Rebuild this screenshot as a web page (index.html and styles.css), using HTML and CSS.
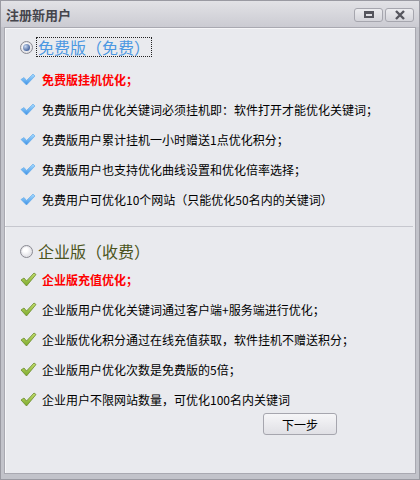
FILE: index.html
```html
<!DOCTYPE html>
<html>
<head>
<meta charset="utf-8">
<link rel="stylesheet" href="styles.css">
</head>
<body>
<div class="window">
  <div class="titlebar">
    <span class="title">注册新用户</span>
    <div class="tbtns">
      <span class="tbtn"><span class="restore"></span></span>
      <span class="tbtn"><svg width="12" height="10" viewBox="0 0 12 10"><path d="M2 1 L10 9 M10 1 L2 9" stroke="#55555d" stroke-width="2.4" fill="none"/></svg></span>
    </div>
  </div>
  <div class="panel">
    <div class="section sec1">
      <div class="head">
        <span class="radio on"><span class="dot"></span></span>
        <span class="htext free">免费版（免费）</span>
      </div>
      <ul class="list l1">
        <li><svg class="ck" width="16" height="13" viewBox="0 0 16 13"><defs><linearGradient id="gb" x1="0" y1="0" x2="0" y2="1"><stop offset="0" stop-color="#a8dcff"/><stop offset="1" stop-color="#3e92e6"/></linearGradient></defs><path d="M1 6.5 L4 4.5 L6.5 7.5 L13 1 L15 3 L6.5 12 Z" fill="url(#gb)" stroke="#5aa6ea" stroke-width="0.6"/></svg><span class="red">免费版挂机优化；</span></li>
        <li><svg class="ck" width="16" height="13" viewBox="0 0 16 13"><path d="M1 6.5 L4 4.5 L6.5 7.5 L13 1 L15 3 L6.5 12 Z" fill="url(#gb)" stroke="#5aa6ea" stroke-width="0.6"/></svg><span>免费版用户优化关键词必须挂机即：软件打开才能优化关键词；</span></li>
        <li><svg class="ck" width="16" height="13" viewBox="0 0 16 13"><path d="M1 6.5 L4 4.5 L6.5 7.5 L13 1 L15 3 L6.5 12 Z" fill="url(#gb)" stroke="#5aa6ea" stroke-width="0.6"/></svg><span>免费版用户累计挂机一小时赠送1点优化积分；</span></li>
        <li><svg class="ck" width="16" height="13" viewBox="0 0 16 13"><path d="M1 6.5 L4 4.5 L6.5 7.5 L13 1 L15 3 L6.5 12 Z" fill="url(#gb)" stroke="#5aa6ea" stroke-width="0.6"/></svg><span>免费版用户也支持优化曲线设置和优化倍率选择；</span></li>
        <li><svg class="ck" width="16" height="13" viewBox="0 0 16 13"><path d="M1 6.5 L4 4.5 L6.5 7.5 L13 1 L15 3 L6.5 12 Z" fill="url(#gb)" stroke="#5aa6ea" stroke-width="0.6"/></svg><span>免费用户可优化10个网站（只能优化50名内的关键词）</span></li>
      </ul>
    </div>
    <div class="sep"></div>
    <div class="section sec2">
      <div class="head">
        <span class="radio"></span>
        <span class="htext ent">企业版（收费）</span>
      </div>
      <ul class="list l2">
        <li><svg class="ck" width="17" height="15" viewBox="0 0 17 15"><defs><linearGradient id="gg" x1="0" y1="0" x2="0" y2="1"><stop offset="0" stop-color="#c6e070"/><stop offset="1" stop-color="#7aa82a"/></linearGradient></defs><path d="M1 8 L4 6 L6.5 9 L14 1 L16 2.5 L6.5 14 Z" fill="url(#gg)" stroke="#6a8a2a" stroke-width="0.8"/></svg><span class="red">企业版充值优化；</span></li>
        <li><svg class="ck" width="17" height="15" viewBox="0 0 17 15"><path d="M1 8 L4 6 L6.5 9 L14 1 L16 2.5 L6.5 14 Z" fill="url(#gg)" stroke="#6a8a2a" stroke-width="0.8"/></svg><span>企业版用户优化关键词通过客户端+服务端进行优化；</span></li>
        <li><svg class="ck" width="17" height="15" viewBox="0 0 17 15"><path d="M1 8 L4 6 L6.5 9 L14 1 L16 2.5 L6.5 14 Z" fill="url(#gg)" stroke="#6a8a2a" stroke-width="0.8"/></svg><span>企业版优化积分通过在线充值获取，软件挂机不赠送积分；</span></li>
        <li><svg class="ck" width="17" height="15" viewBox="0 0 17 15"><path d="M1 8 L4 6 L6.5 9 L14 1 L16 2.5 L6.5 14 Z" fill="url(#gg)" stroke="#6a8a2a" stroke-width="0.8"/></svg><span>企业版用户优化次数是免费版的5倍；</span></li>
        <li><svg class="ck" width="17" height="15" viewBox="0 0 17 15"><path d="M1 8 L4 6 L6.5 9 L14 1 L16 2.5 L6.5 14 Z" fill="url(#gg)" stroke="#6a8a2a" stroke-width="0.8"/></svg><span>企业用户不限网站数量，可优化100名内关键词</span></li>
      </ul>
      <div class="actions"><button class="btn">下一步</button></div>
    </div>
  </div>
</div>
</body>
</html>
```
FILE: styles.css
```css
* { box-sizing: border-box; }
html, body { margin: 0; padding: 0; }
body {
  width: 420px;
  height: 480px;
  font-family: "Noto Sans CJK SC", "Noto Sans", sans-serif;
  font-size: 12px;
  color: #000;
}
.window {
  width: 420px;
  height: 480px;
  border: 1px solid #9a9aa2;
  background: #c2c3ca;
  display: flex;
  flex-direction: column;
}
.titlebar {
  height: 26px;
  flex: none;
  display: flex;
  align-items: center;
  justify-content: space-between;
  padding: 0 5px 0 5px;
  background: linear-gradient(#e2e2e6, #cbcbd2);
}
.title {
  font-size: 13px;
  font-weight: bold;
  color: #45454c;
  line-height: 1;
}
.tbtns { display: flex; gap: 2px; margin-top: 1px; }
.tbtn {
  width: 29px;
  height: 14px;
  border: 1px solid #a6a6ae;
  border-radius: 3px;
  background: linear-gradient(#ececef, #d4d4da);
  display: flex;
  align-items: center;
  justify-content: center;
}
.restore {
  width: 10px;
  height: 7px;
  border: 2px solid #55555d;
  border-top-width: 3px;
}
.panel {
  flex: 1;
  margin: 0 3px 5px 3px;
  background: #e9eaee;
  border: 1px solid #a9a9b1;
  box-shadow: inset 1px 1px 0 #f6f6f8;
  display: flex;
  flex-direction: column;
}
.section { padding-left: 15px; }
.sec1 { padding-top: 9px; }
.head {
  height: 20px;
  display: flex;
  align-items: center;
}
.radio {
  width: 13px;
  height: 13px;
  border-radius: 50%;
  border: 1px solid #8a8a92;
  background: radial-gradient(circle at 40% 35%, #ffffff 20%, #cfcfd6);
  box-shadow: inset 0 0 0 1px #e4e4e8;
  display: flex;
  align-items: center;
  justify-content: center;
  margin-right: 3px;
  flex: none;
}
.dot {
  width: 7px;
  height: 7px;
  border-radius: 50%;
  background: radial-gradient(circle at 35% 35%, #c8d8f0, #4a68a0 70%);
}
.htext {
  font-size: 16px;
  line-height: 18px;
  padding: 0 1px;
}
.free {
  color: #4c98e2;
  border: 1px dotted #222;
}
.ent { color: #4a5420; margin-left: 1px; }
.list { list-style: none; margin: 0; padding: 0; }
.l1 { margin-top: 7px; }
.l2 { margin-top: 3px; }
.list li {
  height: 30px;
  display: flex;
  align-items: center;
}
.ck { flex: none; margin-right: 6px; }
.l2 .ck { margin-right: 5px; }
.red { color: #f00; font-weight: bold; }
.sep {
  height: 1px;
  background: #c6c7ce;
  margin-top: 12px;
  margin-right: 2px;
}
.sec2 { padding-top: 14px; }
.actions {
  display: flex;
  justify-content: flex-end;
  padding-right: 78px;
}
.btn {
  width: 74px;
  height: 22px;
  margin-top: -1px;
  border: 1px solid #a6a6ae;
  border-radius: 3px;
  background: linear-gradient(#f6f6f8, #e0e0e5);
  font-family: "Noto Sans CJK SC", sans-serif;
  font-size: 12px;
  color: #000;
  padding: 0;
}
```
